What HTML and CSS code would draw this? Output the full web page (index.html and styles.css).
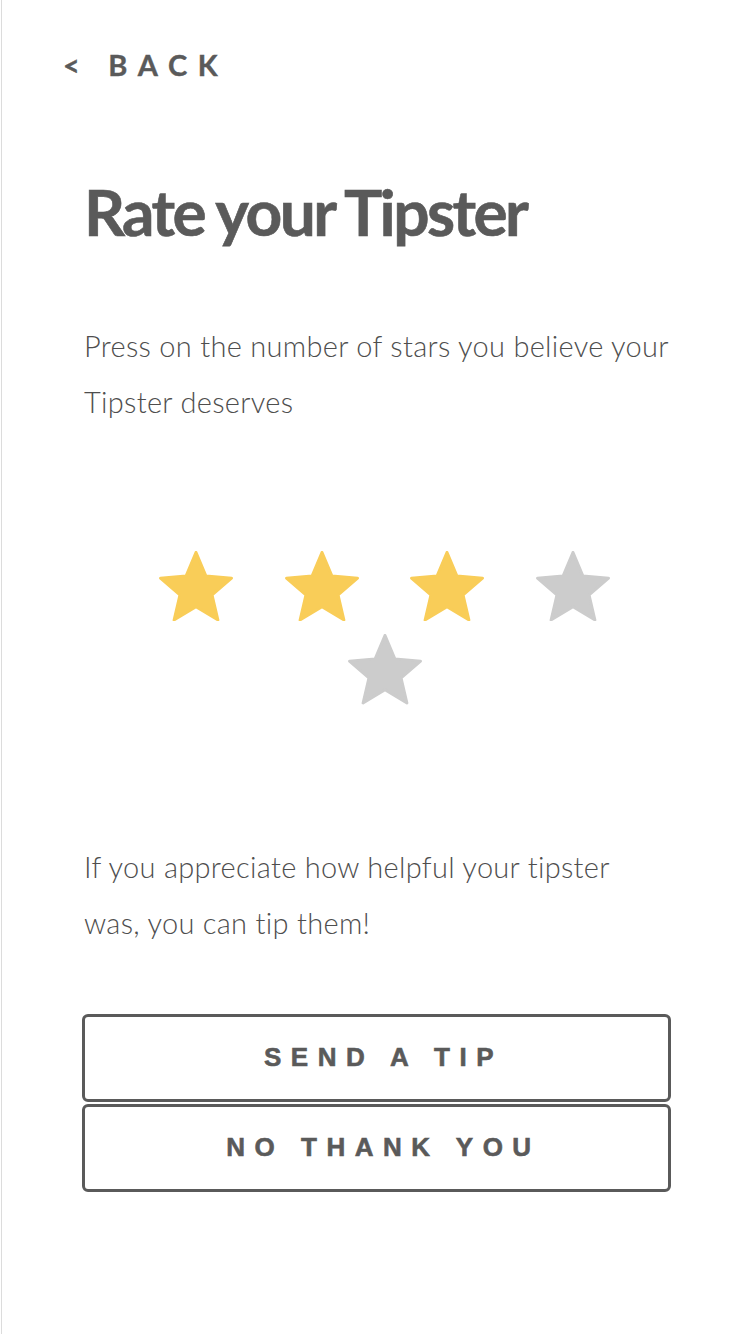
FILE: index.html
```html
<!DOCTYPE html>
<html lang="en">
<head>
<meta charset="utf-8">
<title>Rate your Tipster</title>
<link rel="stylesheet" href="styles.css">
</head>
<body>
<div class="page">
  <header class="topbar">
    <a class="back" href="#">&lt; BACK</a>
  </header>
  <main class="content">
    <h1 class="title">Rate your Tipster</h1>
    <p class="text intro">Press on the number of stars you believe your Tipster deserves</p>
    <div class="stars-wrap">
      <div class="stars">
        <svg class="star on" viewBox="1.6 1.6 20.8 19.8"><path d="M12 17.27L18.18 21l-1.64-7.03L22 9.24l-7.19-.61L12 2 9.19 8.63 2 9.24l5.46 4.73L5.82 21z"/></svg>
        <svg class="star on" viewBox="1.6 1.6 20.8 19.8"><path d="M12 17.27L18.18 21l-1.64-7.03L22 9.24l-7.19-.61L12 2 9.19 8.63 2 9.24l5.46 4.73L5.82 21z"/></svg>
        <svg class="star on" viewBox="1.6 1.6 20.8 19.8"><path d="M12 17.27L18.18 21l-1.64-7.03L22 9.24l-7.19-.61L12 2 9.19 8.63 2 9.24l5.46 4.73L5.82 21z"/></svg>
        <svg class="star off" viewBox="1.6 1.6 20.8 19.8"><path d="M12 17.27L18.18 21l-1.64-7.03L22 9.24l-7.19-.61L12 2 9.19 8.63 2 9.24l5.46 4.73L5.82 21z"/></svg>
        <svg class="star off" viewBox="1.6 1.6 20.8 19.8"><path d="M12 17.27L18.18 21l-1.64-7.03L22 9.24l-7.19-.61L12 2 9.19 8.63 2 9.24l5.46 4.73L5.82 21z"/></svg>
      </div>
    </div>
    <p class="text tip-text">If you appreciate how helpful your tipster was, you can tip them!</p>
    <div class="actions">
      <button class="btn" type="button">SEND A TIP</button>
      <button class="btn" type="button">NO THANK YOU</button>
    </div>
  </main>
</div>
</body>
</html>
```
FILE: styles.css
```css
html, body {
  margin: 0;
  padding: 0;
  background: #ffffff;
}

body {
  padding-left: 1px;
  font-family: "Lato", "Liberation Sans", sans-serif;
  color: #5a5a5a;
}

.page {
  min-height: 1334px;
  border-left: 1px solid #dcdcdc;
  box-sizing: border-box;
}

.topbar {
  padding: 40px 0 0 61px;
  height: 50px;
}

.back {
  display: inline-block;
  font-family: "Lato", "Liberation Sans", sans-serif;
  font-weight: 700;
  font-size: 29px;
  line-height: 50px;
  letter-spacing: 10.7px;
  color: #5a5a5a;
  text-decoration: none;
  white-space: pre;
  -webkit-text-stroke: 0.4px #5a5a5a;
}

.content {
  padding: 0 81px 0 80px;
  display: flex;
  flex-direction: column;
}

.title {
  margin: 82px 0 0 2px;
  font-family: "Lato", "Liberation Sans", sans-serif;
  font-weight: 700;
  font-size: 64px;
  line-height: 80px;
  letter-spacing: -2.6px;
  color: #5a5a5a;
  -webkit-text-stroke: 0.6px #5a5a5a;
}

.text {
  margin: 0 0 0 2px;
  font-weight: 300;
  font-size: 29px;
  line-height: 56px;
  letter-spacing: 0.3px;
  color: #4e4e4e;
}

.intro {
  margin-top: 66px;
}

.stars-wrap {
  margin-top: 121px;
  padding: 0 50px 0 66px;
}

.stars {
  display: flex;
  flex-wrap: wrap;
  justify-content: center;
  column-gap: 51.5px;
  row-gap: 13px;
}

.star {
  width: 74px;
  height: 70.4px;
  display: block;
}

.star path {
  stroke-width: 0.8;
  stroke-linejoin: round;
}

.star.on path {
  fill: #f9cd58;
  stroke: #f9cd58;
}

.star.off path {
  fill: #cccccc;
  stroke: #cccccc;
}

.tip-text {
  margin-top: 134px;
}

.actions {
  margin-top: 63px;
  display: flex;
  flex-direction: column;
  gap: 2px;
}

.btn {
  height: 88px;
  width: 100%;
  box-sizing: border-box;
  border: 3px solid #5a5a5a;
  border-radius: 6px;
  background: #ffffff;
  color: #5a5a5a;
  font-family: "Liberation Sans", Arial, sans-serif;
  font-weight: 700;
  font-size: 26px;
  letter-spacing: 9.5px;
  padding: 0 0 0 14px;
  cursor: pointer;
  -webkit-text-stroke: 0.6px #5a5a5a;
}
```
